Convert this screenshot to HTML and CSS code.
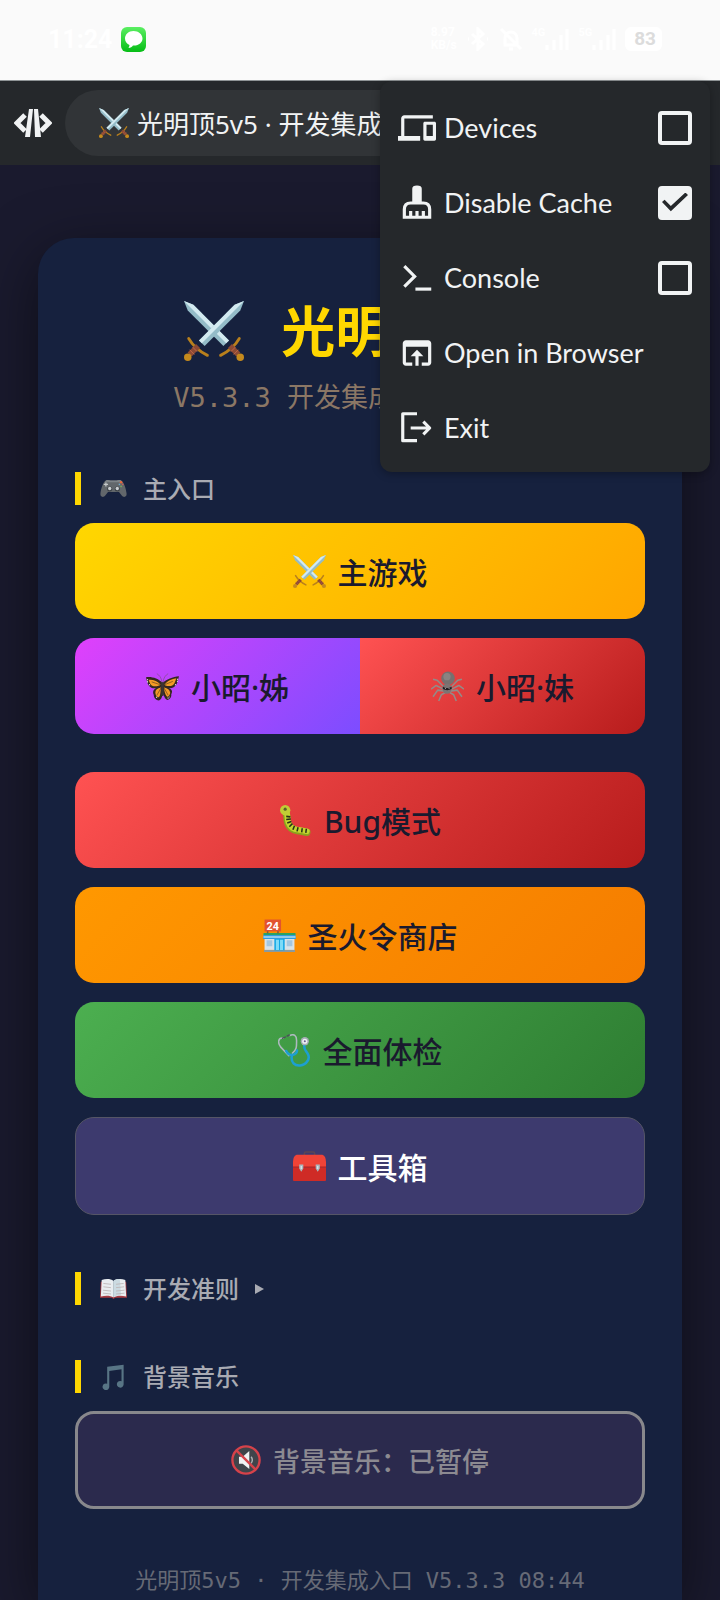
FILE: index.html
```html
<!DOCTYPE html>
<html lang="zh-CN">
<head>
    <meta charset="utf-8"/>
    <title>光明顶5v5 · 开发集成入口</title>
    <meta name="viewport" content="width=device-width, initial-scale=1.0"/>
    <link rel="stylesheet" href="styles.css">
</head>
<body>
<svg class="sprite" aria-hidden="true">
    <symbol id="sword" viewBox="0 0 64 64">
        <path d="M64 0 54 4 16 42l6 6 38-38z" fill="#94bcc8"/>
        <path d="M64 0 54 4 16 42l3 3z" fill="#d3eaf0"/>
        <path d="M5 40c4 7 12 14 20 18" fill="none" stroke="#b9801c" stroke-width="3" stroke-linecap="round"/>
        <path d="M15 48 6 57" stroke="#8d4a34" stroke-width="6"/>
        <path d="m9 49 5 5m-8-2 5 5" stroke="#c0694a" stroke-width="1"/>
        <circle cx="4" cy="60" r="4" fill="#c58a1d"/>
    </symbol>
    <symbol id="swords" viewBox="0 0 64 64">
        <use href="#sword" width="64" height="64" transform="matrix(-1 0 0 1 64 0)"/>
        <use href="#sword" width="64" height="64"/>
    </symbol>
</svg>

<header class="status_bar">
    <div class="status_left">
        <span class="clock">11:24</span>
        <svg class="message_icon" viewBox="0 0 25 25">
            <defs>
                <linearGradient id="green" x2="0" y2="1">
                    <stop stop-color="#5bef62"/><stop offset="1" stop-color="#06bd16"/>
                </linearGradient>
            </defs>
            <rect width="25" height="25" rx="6" fill="url(#green)"/>
            <path d="M12.500 4C7.500 4 4 7.500 4 11.500c0 3 2 5.500 4.500 6.500 0 1-.5 2-1 3 2 0 3.500-1 4.500-2.500 5.500.5 9.500-3 9.500-7S17.500 4 12.500 4z" fill="#fff"/>
        </svg>
    </div>
    <div class="status_right">
        <span class="net_speed">8.97<br>KB/s</span>
        <svg class="status_icon" viewBox="0 0 24 24"><path d="m6 7 11 10-5 5V2l5 5L6 17M2 12h1m18 0h1"/></svg>
        <svg class="status_icon" viewBox="0 0 24 24"><path d="M6 18V11a6 6 0 0 1 12 0v7zM10 22h4M2 2l20 20"/></svg>
        <span class="signal">4G<svg viewBox="0 0 24 24"><path d="M2 23v-5m7 5V13m7 10V8m6 15V2"/></svg></span>
        <span class="signal">5G<svg viewBox="0 0 24 24"><path d="M2 23v-5m7 5V13m7 10V8m6 15V2"/></svg></span>
        <span class="battery">83</span>
    </div>
</header>

<nav class="toolbar">
    <button class="code_btn" aria-label="Code">
        <svg viewBox="0 0 38 28">
            <path d="M11 6 3 14l8 8M27 6l8 8-8 8" fill="none" stroke="#f1f3f4" stroke-width="5"/>
            <path d="M15 0h4l-3 28h-5zM20 0h4l3 28h-6z" fill="#f1f3f4"/>
        </svg>
    </button>
    <button class="page_title">
        <svg><use href="#swords"/></svg>
        <span>光明顶5v5 · 开发集成入口</span>
    </button>
    <div class="menu">
        <label class="menu_item">
            <svg viewBox="0 0 24 24"><path d="M4 6h18V4H4c-1.100 0-2 .9-2 2v11H0v3h14v-3H4V6zm19 2h-6c-.6 0-1 .4-1 1v10c0 .6.400 1 1 1h6c.6 0 1-.4 1-1V9c0-.6-.4-1-1-1zm-1 9h-4v-7h4v7z"/></svg>
            <span>Devices</span>
            <input type="checkbox">
        </label>
        <label class="menu_item">
            <svg viewBox="0 0 24 24"><path fill-rule="evenodd" d="M9 11V3q0-2 3-2t3 2v8h1q5 0 5 5v6H3v-6q0-5 5-5zm-1 2q-3 0-3 3v4h2v-3h2v3h2v-3h2v3h2v-3h2v3h2v-4q0-3-3-3z"/></svg>
            <span>Disable Cache</span>
            <input type="checkbox" checked>
        </label>
        <label class="menu_item">
            <svg viewBox="0 0 24 24"><path d="M4 4.500 10.500 11 4 17.500" fill="none" stroke="#f1f3f4" stroke-width="2"/><path d="M11 18h10v2H11z"/></svg>
            <span>Console</span>
            <input type="checkbox">
        </label>
        <button class="menu_item">
            <svg viewBox="0 0 24 24"><path d="M19 4H5c-1.100 0-2 .9-2 2v12c0 1.100.9 2 2 2h4v-2H5V8h14v10h-4v2h4c1.100 0 2-.9 2-2V6c0-1.100-.9-2-2-2zm-7 6-4 4h3v6h2v-6h3z"/></svg>
            <span>Open in Browser</span>
        </button>
        <button class="menu_item">
            <svg viewBox="0 0 24 24"><path d="M12 3H3v17h9M8 12h12m-4-4 4 4-4 4" fill="none" stroke="#f1f3f4" stroke-width="2" stroke-linejoin="round"/></svg>
            <span>Exit</span>
        </button>
    </div>
</nav>

<main class="container">
    <section class="card">
        <h1 class="title"><svg><use href="#swords"/></svg>光明顶5v5</h1>
        <p class="subtitle">V5.3.3 开发集成入口 08:44</p>

        <h2 class="label">
            <svg viewBox="0 0 64 64">
                <path d="M14 13c5-3 8 0 11 0h14c3 0 6-3 11 0 7 3 12 22 13 31 1 8-7 11-12 4l-6-8H19l-6 8C8 55 0 52 1 44c1-9 6-28 13-31z" fill="#62676b"/>
                <path d="M14 13c5-3 8 0 11 0h14c3 0 6-3 11 0l3 4H11z" fill="#7e8488"/>
                <circle cx="23" cy="33" r="6" fill="#3d4347"/><circle cx="41" cy="33" r="6" fill="#3d4347"/>
                <circle cx="23" cy="32" r="4" fill="#c9cdd0"/><circle cx="41" cy="32" r="4" fill="#c9cdd0"/>
                <path d="M14 18v9m-5-5h10" stroke="#c4c8ca" stroke-width="3"/>
                <circle cx="50" cy="17" r="3" fill="#e6663d"/><circle cx="46" cy="22" r="2" fill="#6fa8c9"/>
                <circle cx="54" cy="22" r="2" fill="#c95c5c"/><circle cx="50" cy="27" r="2" fill="#78ad5c"/>
            </svg>
            主入口
        </h2>
        <div class="buttons">
            <button class="btn gold"><svg><use href="#swords"/></svg>主游戏</button>
            <div class="pair">
                <button class="btn purple">
                    <svg viewBox="0 0 64 64">
                        <path d="M32 25C24 16 10 12 0 14c2 7 2 13 7 18 4 4 9 4 13 3-7 3-7 9-5 13 0 6 5 11 10 11 6-2 6-9 8-14 2 6 4 12 9 13 5-2 8-6 7-11 3-5 2-9-5-12 6 1 12-2 15-7 3-5 3-10 5-16-12 1-25 6-32 13z" fill="#342821"/>
                        <path d="M29 28C22 21 13 18 5 19c2 5 3 10 8 12 6 2 13-1 16-3zM35 28c6-7 15-11 24-12-3 6-2 10-8 14-5 2-13 1-16-2zM29 34c-7 1-11 5-11 10 1 6 3 9 7 9 3-4 5-12 4-19zM35 34c7 1 11 5 12 10-1 5-3 8-6 8-4-4-6-12-6-18z" fill="#f39a25"/>
                        <path d="m29 29-18-6m18 6-8-9m14 9 17-7m-17 7 8-9M29 35l-8 14m8-14-1 17m7-17 8 14" stroke="#392a1e" stroke-width="1"/>
                        <path d="M32 26v22" stroke="#3c3533" stroke-width="5" stroke-linecap="round"/>
                        <path d="M31 24c-1-9-5-14-10-17m12 17c1-9 5-14 10-17" fill="none" stroke="#6b5362" stroke-width="1"/>
                        <path d="M3 18v6m3 4 3 3m52-14v6m-3 5-3 3M20 52l3 3m19 0 4-3" stroke="#fff" stroke-width="2" stroke-dasharray="2 2"/>
                    </svg>
                    小昭·姊
                </button>
                <button class="btn red">
                    <svg viewBox="0 0 64 64">
                        <g fill="none" stroke="#938b88" stroke-width="3" stroke-linejoin="round">
                            <path d="M26 34 12 20 4 18M26 38 10 30 0 37M27 41l-14-2-9 13M29 43l-9 5-5 12"/>
                            <path d="m38 34 14-14 8-2M38 38l16-8 10 7M37 41l14-2 9 13M35 43l9 5 5 12"/>
                        </g>
                        <circle cx="33" cy="16" r="13" fill="#77706f"/>
                        <circle cx="31" cy="13" r="7" fill="#8b8381"/>
                        <ellipse cx="31" cy="36" rx="9" ry="10" fill="#7c7473"/>
                        <path d="M23 32c5 4 12 4 17 0v5c-5 3-12 3-17 0z" fill="#211c20"/>
                        <circle cx="28" cy="36" r="1" fill="#bbb"/><circle cx="35" cy="36" r="1" fill="#bbb"/>
                    </svg>
                    小昭·妹
                </button>
            </div>
            <button class="btn red">
                <svg viewBox="0 0 64 64">
                    <path d="M12 14c5 5 2 14 5 23 3 9 10 14 20 15l17 3" fill="none" stroke="#8aa31c" stroke-width="14" stroke-linecap="round" stroke-linejoin="round"/>
                    <path d="M13 13c5 5 2 14 5 22 3 9 10 14 20 15l16 3" fill="none" stroke="#c3d52f" stroke-width="11" stroke-linecap="round" stroke-linejoin="round"/>
                    <circle cx="12" cy="12" r="10" fill="#c1cd35"/>
                    <circle cx="12" cy="10" r="3" fill="#59602a"/>
                    <path d="m14 24 8 1m-8 5 9-1m-7 8 8-3m-4 10 6-6m1 12 3-8m5 11 2-8m7 10 1-8m7 9 1-8" stroke="#283018" stroke-width="3"/>
                </svg>
                Bug模式
            </button>
            <button class="btn orange">
                <svg viewBox="0 0 64 64">
                    <path d="M3 32h58v28H3z" fill="#d8e2e8"/>
                    <path d="M2 60h60v4H2z" fill="#8a9a9e"/>
                    <path d="M22 37h20v24H22z" fill="#13a7e5"/><path d="M25 40h6v20h-6zm8 0h6v20h-6z" fill="#7ddbf8"/>
                    <path d="M7 41h11v12H7zm39 0h11v12H46z" fill="#a4c7e0"/>
                    <path d="M1 30h62l1 9H0z" fill="#2e9de0"/><path d="M1 27h62v4H1z" fill="#2aa264"/>
                    <path d="M1 34h62v2H1z" fill="#f5f7f8"/>
                    <path d="M9 23v5M29 23v5" stroke="#7a5b43" stroke-width="3"/>
                    <path d="M3 1h32v23H3z" fill="#e2532f"/>
                    <text x="19" y="21" class="shop_sign">24</text>
                </svg>
                圣火令商店
            </button>
            <button class="btn green">
                <svg viewBox="0 0 64 64">
                    <path d="M10 8C0 7-1 17 5 25l16 17M23 3c8-4 13 0 13 9 0 10 1 19-8 25" fill="none" stroke="#aeb9bf" stroke-width="3" stroke-linecap="round"/>
                    <path d="M16 33c3 6 7 8 12 8 6-2 9-5 9-9M27 41c-3 15 6 21 16 20 12-1 20-13 15-22-4-7-8-9-7-17" fill="none" stroke="#1d9fd1" stroke-width="5" stroke-linecap="round"/>
                    <circle cx="52" cy="14" r="8" fill="#a5adb5"/><circle cx="52" cy="14" r="5" fill="#eef2f4"/><circle cx="52" cy="14" r="2" fill="#6c5b95"/>
                    <path d="m9 8 5-2m8-4-4 2" stroke="#4a5559" stroke-width="3" stroke-linecap="round"/>
                </svg>
                全面体检
            </button>
            <button class="btn tools">
                <svg viewBox="0 0 64 64">
                    <path d="M22 12V7q0-3 3-3h14q3 0 3 3v5" fill="none" stroke="#5c4653" stroke-width="3"/>
                    <path d="M7 9h50q7 3 7 14v11H0V23Q0 12 7 9z" fill="#f04337"/>
                    <path d="M0 34h64v24q0 2-2 2H2q-2 0-2-2z" fill="#cf2b26"/>
                    <path d="M0 32h64v2H0z" fill="#b12321"/>
                    <path d="M12 28h8v8l-4 6-4-6zm32 0h8v8l-4 6-4-6z" fill="#a9b8bf"/>
                    <path d="M15 31h2v6h-2zm32 0h2v6h-2z" fill="#e7eef1"/>
                </svg>
                工具箱
            </button>
        </div>

        <details class="rules">
            <summary class="label">
                <svg viewBox="0 0 64 64">
                    <path d="M2 16h60l2 38H36l-4 3-4-3H0z" fill="#a93b41"/>
                    <path d="M4 12c10-4 22-3 28 2 6-5 18-6 28-2l2 39c-11-3-22-3-30 2-8-5-19-5-30-2z" fill="#e9edf0"/>
                    <path d="M32 14c4-4 10-5 15-4l3 38c-7-1-13 1-18 5z" fill="#cbdae1"/>
                    <path d="m8 20 18 2M8 28l18 2M7 36l19 2M38 22l18-2M38 30l19-2M38 38l20-2M7 43l19 2m12 0 20-2" stroke="#bdb4b6" stroke-width="2"/>
                    <path d="M32 14v39" stroke="#8ea0a9" stroke-width="1"/>
                </svg>
                开发准则<span class="arrow"></span>
            </summary>
        </details>

        <h2 class="label">
            <svg viewBox="0 0 64 64">
                <path d="M17 9 56 4v47a8 8 0 1 1-5-8V15l-29 4v38a8 8 0 1 1-5-8z" fill="#587585"/>
            </svg>
            背景音乐
        </h2>
        <button class="btn music">
            <svg viewBox="0 0 64 64">
                <circle cx="32" cy="32" r="29" fill="#40444a" stroke="#d6424a" stroke-width="5"/>
                <path d="M17 25h8l14-12v38L25 40h-8z" fill="#f0f2f3"/>
                <path d="M43 25q5 7 0 14" fill="none" stroke="#aeb2b5" stroke-width="3"/>
                <path d="m12 12 40 40" stroke="#d6424a" stroke-width="5"/>
            </svg>
            背景音乐：已暂停
        </button>

        <footer class="footer">光明顶5v5 · 开发集成入口 V5.3.3 08:44</footer>
    </section>
</main>
</body>
</html>
```
FILE: styles.css
```css
* {
    box-sizing: border-box;
}

body {
    display: flex;
    flex-direction: column;
    min-height: 100vh;
    margin: 0;
    background: #1a1a2e;
    font-family: "Noto Sans", "Noto Sans CJK SC", sans-serif;
}

button {
    margin: 0;
    border: 0;
    font-family: inherit;
    cursor: pointer;
}

svg {
    flex: 0 0 auto;
}

.sprite {
    position: absolute;
    width: 0;
    height: 0;
}

.shop_sign {
    font: bold 21px Roboto, sans-serif;
    fill: #fff;
    text-anchor: middle;
}

/* status bar */
.status_bar {
    display: flex;
    align-items: center;
    justify-content: space-between;
    height: 81px;
    padding: 0 58px 2px 48px;
    background: #fafafa;
    border-bottom: 1px solid #8f9496;
    color: #fff;
}

.status_left,
.status_right {
    display: flex;
    align-items: center;
    gap: 9px;
}

.clock {
    font: bold 25px Roboto, sans-serif;
}

.message_icon {
    width: 25px;
    height: 25px;
}

.net_speed {
    font: bold 12px/13px Roboto, sans-serif;
}

.status_icon,
.signal svg {
    width: 24px;
    height: 24px;
    fill: none;
    stroke: #fff;
    stroke-width: 3;
}

.signal {
    display: flex;
    font: bold 11px/12px Roboto, sans-serif;
}

.battery {
    padding: 0 6px 0 9px;
    border-radius: 6px;
    background: #fff;
    color: #dcdcdc;
    font: bold 19px/24px Roboto, sans-serif;
}

/* toolbar */
.toolbar {
    position: relative;
    display: flex;
    align-items: center;
    gap: 13px;
    height: 84px;
    padding: 0 14px;
    background: #25282b;
}

.code_btn {
    display: flex;
    padding: 0;
    background: none;
}

.code_btn svg {
    width: 38px;
    height: 28px;
}

.page_title {
    display: flex;
    flex: 1;
    align-items: center;
    gap: 8px;
    height: 66px;
    padding: 0 34px;
    border-radius: 33px;
    background: #313437;
    color: #f1f3f4;
    font-size: 26px;
    white-space: nowrap;
}

.page_title svg {
    width: 30px;
    height: 30px;
}

.menu {
    position: absolute;
    top: 0;
    right: 10px;
    z-index: 1;
    width: 330px;
    padding: 9px 0 7px;
    border-radius: 12px;
    background: #25282b;
    box-shadow: 0 2px 8px rgba(0, 0, 0, 0.3);
    font-family: Lato, sans-serif;
}

.menu_item {
    display: flex;
    align-items: center;
    gap: 8px;
    width: 100%;
    height: 75px;
    padding: 0 18px;
    background: none;
    color: #f1f3f4;
    font-size: 27px;
    cursor: pointer;
}

.menu_item svg {
    width: 38px;
    height: 38px;
    fill: #f1f3f4;
}

.menu_item input {
    display: grid;
    place-items: center;
    width: 34px;
    height: 34px;
    margin: 0 0 0 auto;
    border: 4px solid #f1f3f4;
    border-radius: 4px;
    appearance: none;
}

.menu_item input:checked {
    background: #f1f3f4;
}

.menu_item input:checked::before {
    content: "";
    width: 26px;
    height: 20px;
    background: #25282b;
    clip-path: polygon(0 48%, 10% 36%, 34% 68%, 90% 0, 100% 12%, 34% 94%);
}

/* page */
.container {
    display: flex;
    flex: 1;
    flex-direction: column;
    padding: 73px 38px 0;
}

.card {
    flex: 1;
    padding: 60px 37px 4px;
    border-radius: 36px 36px 0 0;
    background: #16213e;
    box-shadow: 0 16px 60px rgba(0, 0, 0, 0.5);
}

.title {
    display: flex;
    align-items: center;
    justify-content: center;
    gap: 37px;
    margin: 0 0 16px;
    color: #ffd700;
    font-size: 54px;
    font-weight: 700;
    line-height: 66px;
}

.title svg {
    width: 60px;
    height: 60px;
}

.subtitle {
    margin: 0 0 56px;
    color: #8b7765;
    font: 27px/36px "DejaVu Sans Mono", "Noto Sans CJK SC", monospace;
    text-align: center;
}

.label {
    display: flex;
    align-items: center;
    height: 33px;
    margin: 0 0 18px;
    padding-left: 19px;
    border-left: 6px solid #ffd700;
    color: #a9abb3;
    font-size: 24px;
    font-weight: 500;
    line-height: 33px;
    list-style: none;
}

.label svg {
    width: 27px;
    height: 27px;
    margin-right: 16px;
}

.arrow {
    margin-left: 16px;
    border: 5px solid transparent;
    border-left: 9px solid #a9abb3;
    border-right: 0;
}

.buttons {
    display: flex;
    flex-direction: column;
    gap: 19px;
    margin-bottom: 57px;
}

.pair {
    display: flex;
    margin-bottom: 19px;
    border-radius: 19px;
    overflow: hidden;
}

.pair .btn {
    flex: 1;
    border-radius: 0;
}

.btn {
    display: flex;
    align-items: center;
    justify-content: center;
    gap: 12px;
    width: 100%;
    min-height: 96px;
    border-radius: 19px;
    color: #1a1a2e;
    font-size: 30px;
    font-weight: 500;
}

.btn svg {
    width: 33px;
    height: 33px;
}

.gold {
    background: linear-gradient(135deg, #ffd700, #ffa500);
}

.purple {
    background: linear-gradient(135deg, #e040fb, #7c4dff);
}

.red {
    background: linear-gradient(135deg, #ff5252, #b71c1c);
}

.orange {
    background: linear-gradient(135deg, #ff9800, #f57c00);
}

.green {
    background: linear-gradient(135deg, #4caf50, #2e7d32);
}

.tools {
    min-height: 98px;
    border: 1px solid #555566;
    background: #3d3a6e;
    color: #fff;
}

.rules {
    margin-bottom: 55px;
}

.rules .label {
    margin: 0;
    cursor: pointer;
}

.music {
    min-height: 98px;
    border: 3px solid #88888c;
    background: #2b2a4d;
    color: #8c8a91;
    font-size: 27px;
}

.music svg {
    width: 30px;
    height: 30px;
}

.footer {
    margin-top: 58px;
    color: #666a76;
    font: 22px/28px "DejaVu Sans Mono", "Noto Sans CJK SC", monospace;
    text-align: center;
}
```
